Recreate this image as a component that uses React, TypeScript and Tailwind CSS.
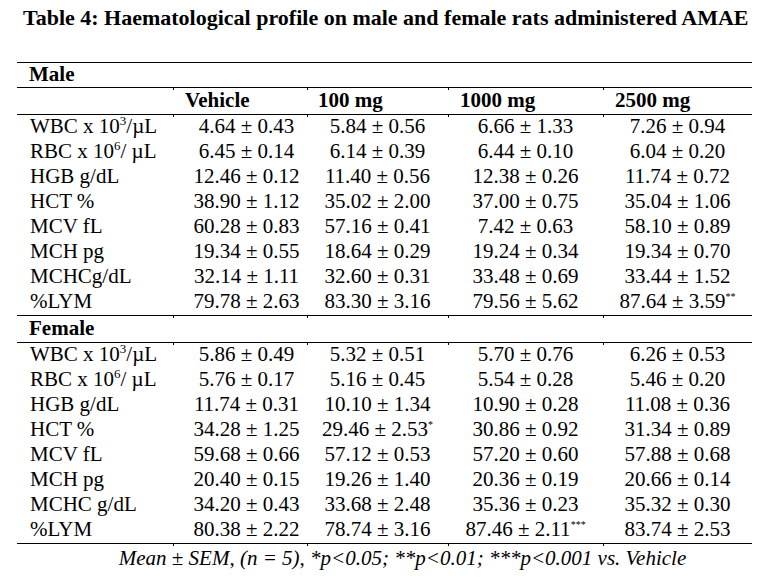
import { FC, ReactNode } from "react";

// One row of the haematology table
type Row = {
  label: ReactNode;
  values: ReactNode[];
};

const sup = (s: string) => (
  <sup className="text-[13px] relative -top-[8px] align-baseline">{s}</sup>
);

const star = (s: string) => (
  <sup className="text-[10px] relative -top-[8px] align-baseline">{s}</sup>
);

const maleRows: Row[] = [
  { label: <>WBC x 10{sup("3")}/µL</>, values: ["4.64 ± 0.43", "5.84 ± 0.56", "6.66 ± 1.33", "7.26 ± 0.94"] },
  { label: <>RBC x 10{sup("6")}/ µL</>, values: ["6.45 ± 0.14", "6.14 ± 0.39", "6.44 ± 0.10", "6.04 ± 0.20"] },
  { label: "HGB g/dL", values: ["12.46 ± 0.12", "11.40 ± 0.56", "12.38 ± 0.26", "11.74 ± 0.72"] },
  { label: "HCT %", values: ["38.90 ± 1.12", "35.02 ± 2.00", "37.00 ± 0.75", "35.04 ± 1.06"] },
  { label: "MCV fL", values: ["60.28 ± 0.83", "57.16 ± 0.41", "7.42 ± 0.63", "58.10 ± 0.89"] },
  { label: "MCH pg", values: ["19.34 ± 0.55", "18.64 ± 0.29", "19.24 ± 0.34", "19.34 ± 0.70"] },
  { label: "MCHCg/dL", values: ["32.14 ± 1.11", "32.60 ± 0.31", "33.48 ± 0.69", "33.44 ± 1.52"] },
  { label: "%LYM", values: ["79.78 ± 2.63", "83.30 ± 3.16", "79.56 ± 5.62", <>87.64 ± 3.59{star("**")}</>] },
];

const femaleRows: Row[] = [
  { label: <>WBC x 10{sup("3")}/µL</>, values: ["5.86 ± 0.49", "5.32 ± 0.51", "5.70 ± 0.76", "6.26 ± 0.53"] },
  { label: <>RBC x 10{sup("6")}/ µL</>, values: ["5.76 ± 0.17", "5.16 ± 0.45", "5.54 ± 0.28", "5.46 ± 0.20"] },
  { label: "HGB g/dL", values: ["11.74 ± 0.31", "10.10 ± 1.34", "10.90 ± 0.28", "11.08 ± 0.36"] },
  { label: "HCT %", values: ["34.28 ± 1.25", <>29.46 ± 2.53{star("*")}</>, "30.86 ± 0.92", "31.34 ± 0.89"] },
  { label: "MCV fL", values: ["59.68 ± 0.66", "57.12 ± 0.53", "57.20 ± 0.60", "57.88 ± 0.68"] },
  { label: "MCH pg", values: ["20.40 ± 0.15", "19.26 ± 1.40", "20.36 ± 0.19", "20.66 ± 0.14"] },
  { label: "MCHC g/dL", values: ["34.20 ± 0.43", "33.68 ± 2.48", "35.36 ± 0.23", "35.32 ± 0.30"] },
  { label: "%LYM", values: ["80.38 ± 2.22", "78.74 ± 3.16", <>87.46 ± 2.11{star("***")}</>, "83.74 ± 2.53"] },
];

const cols = "grid grid-cols-[156px_134px_141px_155px_149px]";

// Horizontal rule, optionally with the little column ticks Word leaves behind
const Rule: FC<{ ticks?: boolean }> = ({ ticks = true }) => (
  <div className={`${cols} h-[3px] -mb-[2px] relative`}>
    {[0, 1, 2, 3, 4].map((i) => (
      <div
        key={i}
        className={`border-t border-black ${ticks && i > 0 ? "border-l" : ""}`}
      />
    ))}
  </div>
);

const DataRows: FC<{ rows: Row[] }> = ({ rows }) => (
  <>
    {rows.map((r, i) => (
      <div key={i} className={`${cols} h-[25px] leading-[22px]`}>
        <div className="pl-[13px] whitespace-nowrap">{r.label}</div>
        {r.values.map((v, j) => (
          <div key={j} className={`text-center whitespace-nowrap ${j === 0 ? "pl-[13px]" : ""}`}>
            {v}
          </div>
        ))}
      </div>
    ))}
  </>
);

const App: FC = () => {
  return (
    <div className="w-[762px] h-[581px] bg-white text-[#000] font-['Liberation_Serif',serif] overflow-hidden">
      <h1 className="pl-[23px] pt-[3px] text-[22px] leading-[30px] font-bold whitespace-nowrap">
        Table 4: Haematological profile on male and female rats administered AMAE
      </h1>

      <div className="ml-[17px] w-[735px] mt-[29px] text-[21px]">
        <Rule ticks={false} />
        <div className="h-[24px] leading-[22px] pl-[12px] font-bold">Male</div>
        <Rule />
        <div className={`${cols} h-[26px] leading-[24px] font-bold`}>
          <div />
          <div className="pl-[12px]">Vehicle</div>
          <div className="pl-[11px]">100 mg</div>
          <div className="pl-[12px]">1000 mg</div>
          <div className="pl-[12px]">2500 mg</div>
        </div>
        <Rule />
        <DataRows rows={maleRows} />
        <Rule />
        <div className="h-[26px] leading-[24px] pl-[12px] font-bold">Female</div>
        <Rule />
        <DataRows rows={femaleRows} />
        <Rule />
        <div className="pt-[2px] pl-[36px] text-center italic leading-[25px] whitespace-nowrap">
          Mean ± SEM, (n = 5), *p&lt;0.05; **p&lt;0.01; ***p&lt;0.001 vs. Vehicle
        </div>
      </div>
    </div>
  );
};

export default App;
